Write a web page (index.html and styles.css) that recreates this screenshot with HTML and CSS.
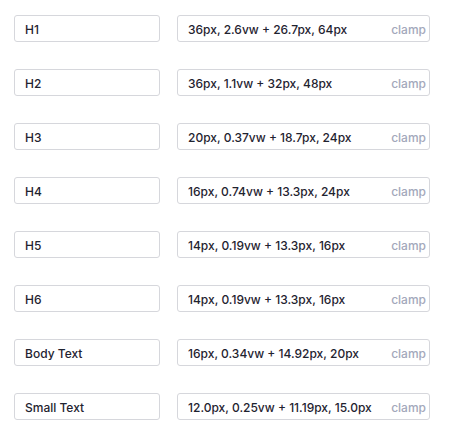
FILE: index.html
```html
<!DOCTYPE html>
<html>
<head>
<meta charset="utf-8">
<link rel="stylesheet" href="styles.css">
</head>
<body>
<div class="list">
  <div class="row"><div class="field name">H1</div><div class="field value"><span class="val">36px, 2.6vw + 26.7px, 64px</span><span class="tag">clamp</span></div></div>
  <div class="row"><div class="field name">H2</div><div class="field value"><span class="val">36px, 1.1vw + 32px, 48px</span><span class="tag">clamp</span></div></div>
  <div class="row"><div class="field name">H3</div><div class="field value"><span class="val">20px, 0.37vw + 18.7px, 24px</span><span class="tag">clamp</span></div></div>
  <div class="row"><div class="field name">H4</div><div class="field value"><span class="val">16px, 0.74vw + 13.3px, 24px</span><span class="tag">clamp</span></div></div>
  <div class="row"><div class="field name">H5</div><div class="field value"><span class="val">14px, 0.19vw + 13.3px, 16px</span><span class="tag">clamp</span></div></div>
  <div class="row"><div class="field name">H6</div><div class="field value"><span class="val">14px, 0.19vw + 13.3px, 16px</span><span class="tag">clamp</span></div></div>
  <div class="row"><div class="field name">Body Text</div><div class="field value"><span class="val">16px, 0.34vw + 14.92px, 20px</span><span class="tag">clamp</span></div></div>
  <div class="row"><div class="field name">Small Text</div><div class="field value"><span class="val">12.0px, 0.25vw + 11.19px, 15.0px</span><span class="tag">clamp</span></div></div>
</div>
</body>
</html>
```
FILE: styles.css
```css
html, body {
  margin: 0;
  padding: 0;
  background: #ffffff;
}
body {
  font-family: Inter, "Noto Sans", sans-serif;
  font-size: 12px;
  font-weight: 500;
  color: #1f2330;
}
.list {
  display: flex;
  flex-direction: column;
  gap: 27px;
  padding: 15px 0 0 14px;
}
.row {
  display: flex;
  gap: 17px;
}
.field {
  box-sizing: border-box;
  height: 27px;
  border: 1px solid #d6d7dc;
  border-radius: 3px;
  display: flex;
  align-items: center;
  padding: 1px 10px 0;
}
.name {
  width: 146px;
}
.value {
  width: 253px;
  justify-content: space-between;
  padding-right: 3px;
}
.tag {
  color: #a3a8bb;
}
```
